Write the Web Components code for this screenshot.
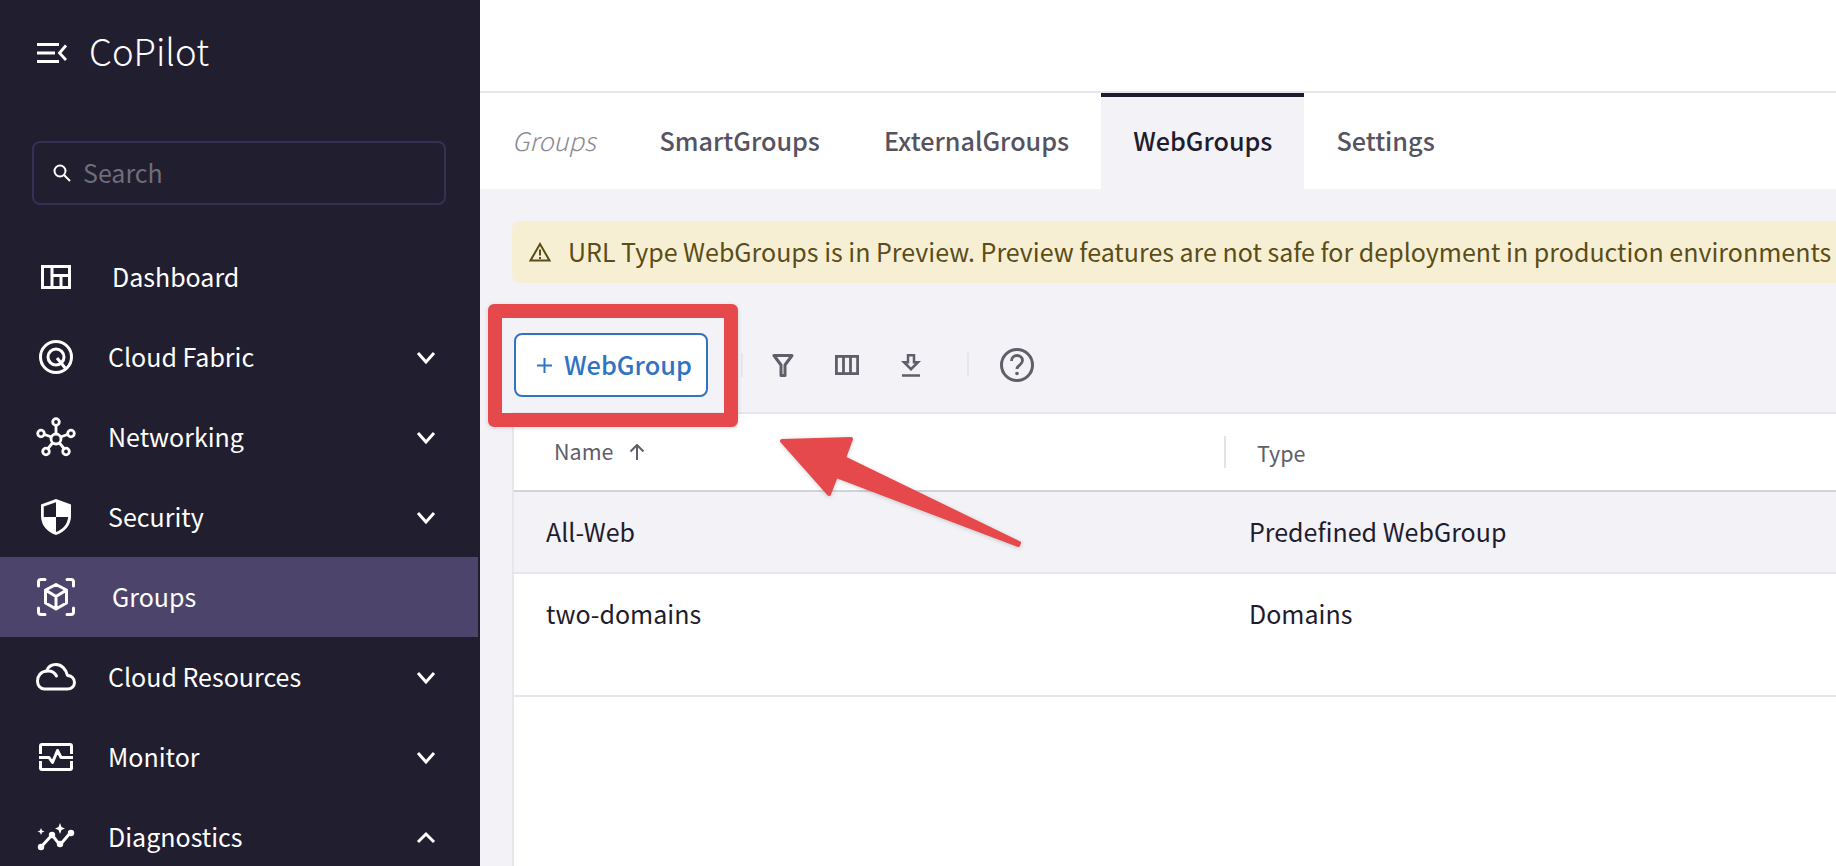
<!DOCTYPE html>
<html>
<head>
<meta charset="utf-8">
<title>CoPilot WebGroups</title>
<style>
  html,body{margin:0;padding:0;height:866px;overflow:hidden;background:#fff;}
  body{font-family:"Noto Sans CJK JP","Noto Sans",sans-serif;}
  svg{display:block;}
</style>
</head>
<body>
<app-shell>
  <side-bar slot="side">
    <nav-item label="Dashboard" leaf>
      <svg width="30" height="24" viewBox="0 0 30 24" fill="none" stroke="#fff" stroke-width="3"><rect x="1.5" y="1.5" width="27" height="21"/><path d="M11 1.5v21M11 10.5h17.5M20 10.5v12"/></svg>
    </nav-item>
    <nav-item label="Cloud Fabric" chevron="down">
      <svg width="34" height="34" viewBox="0 0 34 34" fill="none" stroke="#fff" stroke-width="3"><circle cx="17" cy="17" r="15.500"/><circle cx="17" cy="17" r="8"/><path d="M18 18l9 11"/></svg>
    </nav-item>
    <nav-item label="Networking" chevron="down">
      <svg width="40" height="40" viewBox="0 0 40 40" fill="none" stroke="#fff" stroke-width="2.800"><circle cx="20" cy="22" r="5"/><circle cx="20" cy="5" r="3.300"/><circle cx="5" cy="16.500" r="3.300"/><circle cx="35" cy="16.500" r="3.300"/><circle cx="10" cy="34.500" r="3.300"/><circle cx="30" cy="34.500" r="3.300"/><path d="M20 8.500V17M8.500 17.500l7 2.500M31.500 17.500l-7 2.500M12 31.500l4.500-5.500M28 31.500l-4.500-5.500"/></svg>
    </nav-item>
    <nav-item label="Security" chevron="down">
      <svg width="30" height="36" viewBox="0 0 30 36"><path fill="#fff" d="M15 0L30 5.500V17C30 26 24 33 15 36C6 33 0 26 0 17V5.500Z"/><path fill="#211e30" d="M15 3.200V18H2.800V7.500ZM15 18H27.200C26.500 25 22 30.500 15 33Z"/></svg>
    </nav-item>
    <nav-item label="Groups" leaf active>
      <svg width="38" height="38" viewBox="0 0 38 38" fill="none" stroke="#fff" stroke-width="3" stroke-linecap="round" stroke-linejoin="round"><path d="M1.500 8V4Q1.500 1.500 4 1.500H8M30 1.500h4q2.500 0 2.500 2.500v4M1.500 30v4q0 2.500 2.500 2.500h4M30 36.500h4q2.500 0 2.500-2.500v-4"/><path d="M19 6.500l10.500 5.500v13L19 31 8.500 25V12ZM8.500 12L19 18.500 29.500 12M19 18.500V31"/></svg>
    </nav-item>
    <nav-item label="Cloud Resources" chevron="down">
      <svg width="40" height="28" viewBox="0 0 40 28" fill="none" stroke="#fff" stroke-width="3" stroke-linecap="round" stroke-linejoin="round"><path d="M8.500 26h23c4 0 7-3 7-6.500 0-4-3-7-7-7C30 6 25.500 1.500 20 1.500c-4.500 0-8 2.500-9.500 6.500C5 8.500 1.500 13 1.500 18c0 4.500 3 8 7 8Z"/><path d="M10.500 8c4-.5 8 1 10 5"/></svg>
    </nav-item>
    <nav-item label="Monitor" chevron="down">
      <svg width="34" height="28" viewBox="0 0 34 28" fill="none" stroke="#fff" stroke-width="3" stroke-linejoin="round"><path d="M1.500 11V3q0-1.500 1.500-1.500h28q1.500 0 1.500 1.500v8M1.500 18v7q0 1.500 1.500 1.500h28q1.500 0 1.500-1.500v-7"/><path d="M0 14.500h10l3.500 5 5-12 3.500 7H34"/></svg>
    </nav-item>
    <nav-item label="Diagnostics" chevron="up">
      <svg width="38" height="28" viewBox="0 0 38 28"><path fill="none" stroke="#fff" stroke-width="3" d="M4 24L15 12l8 10 11-13"/><circle cx="4" cy="24" r="3.200" fill="#fff"/><circle cx="15" cy="12" r="3.200" fill="#fff"/><circle cx="23" cy="21" r="3.200" fill="#fff"/><circle cx="34" cy="10" r="3.200" fill="#fff"/><path fill="#fff" d="M23 0l1.500 4L28 5.500 24.500 7 23 11 21.500 7 18 5.500 21.500 4ZM4 5l1 2.500L7.500 8.500 5 9.500 4 12 3 9.500 .5 8.500 3 7.500Z"/></svg>
    </nav-item>
  </side-bar>
  <tab-bar>
    <tab-link muted>Groups</tab-link>
    <tab-link>SmartGroups</tab-link>
    <tab-link>ExternalGroups</tab-link>
    <tab-link active>WebGroups</tab-link>
    <tab-link>Settings</tab-link>
  </tab-bar>
  <alert-banner>URL Type WebGroups is in Preview. Preview features are not safe for deployment in production environments</alert-banner>
  <tool-bar></tool-bar>
  <data-table></data-table>
  <call-out></call-out>
</app-shell>

<script>
// page frame, sidebar on the left and the content on the right
class AppShell extends HTMLElement {
  constructor() {
    super();
    this.attachShadow({ mode: 'open' });
    this.shadowRoot.innerHTML = `
      <style>
        :host{display:flex;width:1836px;height:866px;overflow:hidden;position:relative;color:#1f1c2e;}
        .main{flex:1;min-width:0;display:flex;flex-direction:column;background:#f2f2f7;}
        .top{height:91px;background:#fff;border-bottom:2px solid #e6e6ec;flex:none;}
      </style>
      <slot name="side"></slot>
      <div class="main">
        <div class="top"></div>
        <slot></slot>
      </div>`;
  }
}

class SideBar extends HTMLElement {
  constructor() {
    super();
    this.attachShadow({ mode: 'open' });
    this.shadowRoot.innerHTML = `
      <style>
        :host{display:block;flex:none;width:478px;border-right:2px solid #211e30;height:866px;background:#211e30;color:#fff;overflow:hidden;}
        .logo{display:flex;align-items:center;height:106px;padding-left:37px;}
        .logo span{font-size:36.500px;line-height:48px;margin:-4px 0 0 22px;font-weight:300;}
        .search{box-sizing:border-box;height:64px;width:414px;margin:35px 0 32px 32px;border:2px solid #353154;border-radius:8px;display:flex;align-items:center;padding-left:19px;}
        .search span{color:#6f6d7a;font-size:25px;line-height:34px;margin:-3px 0 0 12px;}
      </style>
      <div class="logo">
        <svg width="30" height="20" viewBox="0 0 30 20" fill="none" stroke="#fff" stroke-width="2.800"><path d="M0 1.500h22M0 10h18M0 18.500h22M29 2.500L22.500 10l6.500 7"/></svg>
        <span>CoPilot</span>
      </div>
      <div class="search">
        <svg width="18" height="18" viewBox="0 0 18 18" fill="none" stroke="#fff" stroke-width="2"><circle cx="7" cy="7" r="5.500"/><path d="M11 11l6 6"/></svg>
        <span>Search</span>
      </div>
      <slot></slot>`;
  }
}

// one row of the side menu, icon comes in by slot
class NavItem extends HTMLElement {
  constructor() {
    super();
    this.attachShadow({ mode: 'open' });
    const chevron = this.getAttribute('chevron');
    const d = chevron === 'up' ? 'M2 11l8-8 8 8' : 'M2 2l8 9 8-9';
    this.shadowRoot.innerHTML = `
      <style>
        :host{display:flex;align-items:center;height:80px;padding:0 42px 0 36px;box-sizing:border-box;width:478px;}
        :host([active]){background:#4d446c;}
        .icon{width:40px;display:flex;justify-content:center;margin-right:32px;flex:none;}
        :host([leaf]) .icon{margin-right:36px;}
        .label{font-size:25px;line-height:36px;flex:1;margin-top:-3px;}
      </style>
      <div class="icon"><slot></slot></div>
      <div class="label">${this.getAttribute('label')}</div>
      ${chevron ? `<svg width="20" height="13" viewBox="0 0 20 13" fill="none" stroke="#fff" stroke-width="3"><path d="${d}"/></svg>` : ''}`;
  }
}

class TabBar extends HTMLElement {
  constructor() {
    super();
    this.attachShadow({ mode: 'open' });
    this.shadowRoot.innerHTML = `
      <style>
        :host{display:flex;height:96px;background:#fff;flex:none;}
      </style>
      <slot></slot>`;
  }
}

class TabLink extends HTMLElement {
  constructor() {
    super();
    this.attachShadow({ mode: 'open' });
    this.shadowRoot.innerHTML = `
      <style>
        :host{display:flex;align-items:center;box-sizing:border-box;padding:0 32px 3px;height:96px;font-size:25.200px;font-weight:500;color:#55535f;}
        :host([muted]){font-size:25.600px;font-weight:300;font-style:italic;color:#8b8a93;padding-left:32px;padding-right:32px;}
        :host([active]){background:#f2f2f7;color:#1f1c2e;border-top:4px solid #1f1c30;padding-bottom:7px;}
      </style>
      <slot></slot>`;
  }
}

class AlertBanner extends HTMLElement {
  constructor() {
    super();
    this.attachShadow({ mode: 'open' });
    this.shadowRoot.innerHTML = `
      <style>
        :host{display:flex;align-items:center;flex:none;box-sizing:border-box;height:62px;margin:32px 0 0 32px;padding:0 0 3px 17px;background:#f7efd4;border-radius:8px 0 0 8px;color:#5a4d17;font-size:25px;white-space:nowrap;}
        svg{margin:3px 17px 0 0;flex:none;}
      </style>
      <svg width="22" height="20" viewBox="0 0 22 20" fill="none" stroke="#5a4d17" stroke-width="2"><path d="M11 2L1.500 18.500h19Z"/><path d="M11 7.500v6M11 15v2"/></svg>
      <slot></slot>`;
  }
}

class ToolBar extends HTMLElement {
  constructor() {
    super();
    this.attachShadow({ mode: 'open' });
    this.shadowRoot.innerHTML = `
      <style>
        :host{display:flex;align-items:center;flex:none;height:129px;box-sizing:border-box;padding:50px 0 15px 34px;color:#5f5e69;}
        button{all:unset;box-sizing:border-box;width:194px;height:64px;display:flex;align-items:center;background:#fff;border:2px solid #2f74c0;border-radius:8px;color:#2f74c0;font-size:25.300px;font-weight:500;padding:0 0 3px 21px;}
        button svg{margin:3px 12px 0 0;}
        .sep{width:2px;height:24px;background:#e6e6ec;}
      </style>
      <button><svg width="15" height="15" viewBox="0 0 15 15" stroke="#2f74c0" stroke-width="2"><path d="M7.500 0v15M0 7.500h15"/></svg>WebGroup</button>
      <div class="sep" style="margin-left:33px"></div>
      <svg style="margin-left:29px" width="22" height="23" viewBox="0 0 22 23" fill="none" stroke="#5f5e69" stroke-width="3" stroke-linejoin="round"><path d="M2 1.500h18L13 11v10.500H9V11Z"/></svg>
      <svg style="margin-left:41px" width="24" height="20" viewBox="0 0 24 20" fill="none" stroke="#5f5e69" stroke-width="2.800"><rect x="1.400" y="1.400" width="21.200" height="17.200"/><path d="M8.500 1v18M15.500 1v18"/></svg>
      <svg style="margin-left:42px" width="20" height="23" viewBox="0 0 20 23" fill="none" stroke="#5f5e69" stroke-width="2.500"><path d="M7 1.200h6v7h4l-7 7-7-7h4Z"/><path d="M1 21.500h18"/></svg>
      <div class="sep" style="margin-left:46px"></div>
      <svg style="margin-left:31px" width="34" height="34" viewBox="0 0 34 34" fill="none" stroke="#5f5e69" stroke-width="3"><circle cx="17" cy="17" r="15.500"/><path stroke-width="2.800" d="M11.500 13c0-3.500 2.500-5.500 5.500-5.500s5.500 2 5.500 5c0 4.500-5.500 4.500-5.500 8.500"/><circle cx="17" cy="25.500" r="1.800" fill="#5f5e69" stroke="none"/></svg>`;
  }
}

class DataTable extends HTMLElement {
  constructor() {
    super();
    this.attachShadow({ mode: 'open' });
    this.shadowRoot.innerHTML = `
      <style>
        :host{display:block;flex:1;margin-left:32px;background:#fff;border-top:2px solid #e6e6ec;border-left:2px solid #e6e6ec;}
        .row{display:grid;grid-template-columns:704px 1fr;align-items:center;box-sizing:border-box;font-size:25px;color:#1f1c2e;}
        .head{grid-template-columns:710px 1fr;height:78px;border-bottom:2px solid #d2d2da;font-size:21.500px;color:#5f5e69;}
        .r1{height:82px;background:#f2f2f7;border-bottom:2px solid #e6e6ec;padding-bottom:3px;}
        .r2{height:123px;border-bottom:2px solid #e6e6ec;align-items:start;padding-top:21px;}
        .cell{padding-left:32px;}
        .r1 .cell + .cell,.r2 .cell + .cell{padding-left:31px;}
        .name{display:flex;align-items:center;padding:0 0 4px 40px;}
        .name svg{margin:4px 0 0 16px;}
        .type{display:flex;align-items:center;border-left:2px solid #e2e2e8;height:32px;padding:0 0 0 31px;}
      </style>
      <div class="row head">
        <div class="name">Name<svg width="16" height="16" viewBox="0 0 16 16" fill="none" stroke="#5f5e69" stroke-width="2"><path d="M8 16V1M1.500 7.500L8 1l6.500 6.500"/></svg></div>
        <div class="type">Type</div>
      </div>
      <div class="row r1"><div class="cell">All-Web</div><div class="cell">Predefined WebGroup</div></div>
      <div class="row r2"><div class="cell">two-domains</div><div class="cell">Domains</div></div>`;
  }
}

// the red box and arrow someone drew over the screenshot
class CallOut extends HTMLElement {
  constructor() {
    super();
    this.attachShadow({ mode: 'open' });
    this.shadowRoot.innerHTML = `
      <style>
        :host{display:block;position:absolute;left:0;top:0;width:0;height:0;}
        .box{position:absolute;left:488px;top:304px;width:250px;height:123px;box-sizing:border-box;border:14px solid #e6494c;border-radius:6px;box-shadow:0 1px 4px rgba(0,0,0,.15);}
        svg{position:absolute;left:0;top:0;filter:drop-shadow(0 1px 2px rgba(0,0,0,.18));}
      </style>
      <div class="box"></div>
      <svg width="1836" height="866"><path fill="#e6494c" stroke="#e6494c" stroke-width="4" stroke-linejoin="round" d="M782 441L851 439 844 458 1019 543 1018 545 836 476 829 494Z"/></svg>`;
  }
}

customElements.define('app-shell', AppShell);
customElements.define('side-bar', SideBar);
customElements.define('nav-item', NavItem);
customElements.define('tab-bar', TabBar);
customElements.define('tab-link', TabLink);
customElements.define('alert-banner', AlertBanner);
customElements.define('tool-bar', ToolBar);
customElements.define('data-table', DataTable);
customElements.define('call-out', CallOut);
</script>
</body>
</html>
